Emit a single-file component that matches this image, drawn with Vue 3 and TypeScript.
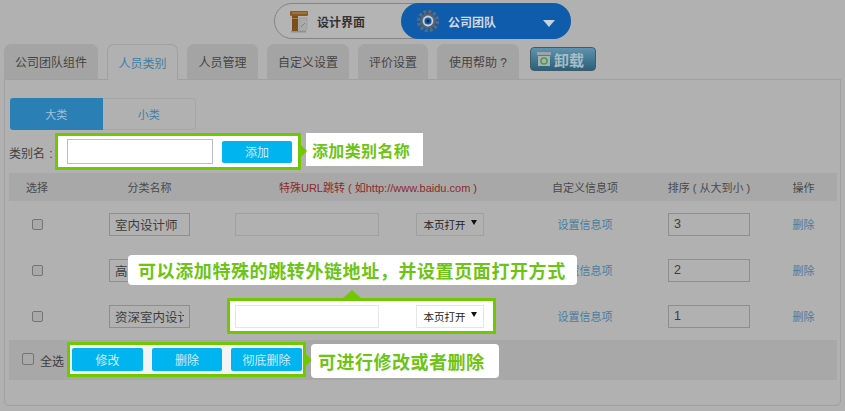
<script setup lang="ts">
const tabs = [
  { label: '公司团队组件', width: 94 },
  { label: '人员类别', width: 71, active: true },
  { label: '人员管理', width: 71 },
  { label: '自定义设置', width: 82 },
  { label: '评价设置', width: 70 },
  { label: '使用帮助 ?', width: 82 },
]
const rows = [
  { name: '室内设计师', sort: '3' },
  { name: '高级室内设计师', sort: '2' },
  { name: '资深室内设计师', sort: '1' },
]
</script>

<template>
  <div class="page">
    <header class="switcher">
      <div class="pill">
        <div class="pill-left">
          <svg class="wood" viewBox="0 0 20 23" width="20" height="23">
            <rect x="3" y="3" width="6" height="19" fill="#7a4f1c" />
            <rect x="1" y="1" width="18" height="5" rx="1" fill="#8a5a20" />
            <rect x="3" y="2.5" width="15" height="1" fill="#b48a4a" />
            <rect x="3" y="8" width="6" height="1" fill="#a87c3c" />
            <path d="M10 8h8v11l-2 2h-6z" fill="#aaa" stroke="#8e8e8e" stroke-width=".5" />
            <path d="M12 17l4-4" stroke="#777" stroke-width=".8" />
            <rect x="2" y="21" width="15" height="1.5" fill="#8f8f8f" />
          </svg>
          <span>设计界面</span>
        </div>
        <div class="pill-right">
          <svg viewBox="0 0 24 24" width="24" height="24">
            <circle cx="12" cy="12" r="9.5" fill="none" stroke="#5b6a78" stroke-width="3.4" stroke-dasharray="3 1.98" />
            <circle cx="12" cy="12" r="7.6" fill="#59636d" />
            <circle cx="12" cy="12" r="5.4" fill="#c8d2da" />
            <circle cx="12" cy="12" r="3.6" fill="#0f5aa8" />
            <circle cx="12" cy="12" r="1.5" fill="#10233a" />
          </svg>
          <span>公司团队</span>
          <i class="caret"></i>
        </div>
      </div>
    </header>

    <nav class="tabs">
      <div
        v-for="tab in tabs"
        :key="tab.label"
        class="tab"
        :class="{ active: tab.active }"
        :style="{ width: tab.width + 'px' }"
      >{{ tab.label }}</div>
      <button class="uninstall">
        <svg viewBox="0 0 16 16" width="16" height="16">
          <rect x="1" y="1" width="14" height="3" fill="#98a6ab" />
          <rect x="2" y="5" width="12" height="10" fill="#a8b2b2" />
          <circle cx="8" cy="10" r="3" fill="none" stroke="#4f9a4f" stroke-width="1.6" />
        </svg>
        <span>卸载</span>
      </button>
    </nav>

    <main class="panel">
      <div class="subtabs">
        <div class="subtab on">大类</div>
        <div class="subtab">小类</div>
      </div>

      <div class="name-row">类别名 :</div>

      <div class="table-head grid">
        <div>选择</div>
        <div>分类名称</div>
        <div class="red">特殊URL跳转 ( 如http://www.baidu.com )</div>
        <div>自定义信息项</div>
        <div>排序 ( 从大到小 )</div>
        <div>操作</div>
      </div>

      <div v-for="row in rows" :key="row.sort" class="grid row">
        <div><input type="checkbox" class="check" /></div>
        <div><input class="field name" :value="row.name" /></div>
        <div class="url-cell">
          <input class="field url" />
          <div class="select">本页打开<i class="mini"></i></div>
        </div>
        <div class="link">设置信息项</div>
        <div><input class="field sort" :value="row.sort" /></div>
        <div class="link">删除</div>
      </div>

      <div class="footer">
        <input type="checkbox" class="check" />
        <span>全选</span>
      </div>
    </main>

    <div class="hl hl-add">
      <input class="hl-input" />
      <button class="cta add">添加</button>
    </div>
    <div class="tip tip-add">添加类别名称</div>
    <i class="arrow arrow-add"></i>

    <div class="tip tip-url">可以添加特殊的跳转外链地址，并设置页面打开方式</div>
    <div class="hl hl-url">
      <input class="hl-url-input" />
      <div class="select bright">本页打开<i class="mini"></i></div>
    </div>
    <i class="arrow-up"></i>

    <div class="hl hl-actions">
      <button class="cta">修改</button>
      <button class="cta">删除</button>
      <button class="cta">彻底删除</button>
    </div>
    <i class="arrow arrow-actions"></i>
    <div class="tip tip-actions">可进行修改或者删除</div>
  </div>
</template>

<style>
html, body { margin: 0; background: #b1b1b1; }
</style>

<style scoped>
.page {
  position: relative;
  width: 845px;
  height: 411px;
  overflow: hidden;
  background: #b1b1b1;
  color: #3c3c3c;
  font: 12px "Liberation Sans", "Noto Sans CJK SC", sans-serif;
  box-sizing: border-box;
  padding: 3px 4px 0;
}
* { box-sizing: border-box; }
.switcher { display: flex; justify-content: center; height: 41px; }
.pill {
  width: 297px;
  height: 36px;
  display: flex;
  justify-content: space-between;
  border: 1px solid #858585;
  border-radius: 18px;
  background: #b4b4b4;
}
.pill-left { display: flex; align-items: center; gap: 8px; padding-left: 14px; font-weight: 700; color: #333; }
.pill-right {
  width: 170px;
  margin: -1px;
  display: flex;
  align-items: center;
  padding-left: 15px;
  border-radius: 18px;
  background: #0f5cad;
  color: #cfd9e4;
  font-weight: 700;
  position: relative;
}
.pill-right span { margin-left: 8px; }
.caret {
  position: absolute;
  right: 16px;
  top: 17px;
  border: 6px solid transparent;
  border-top: 7px solid #c5d2e0;
  border-bottom: 0;
}
.tabs { display: flex; align-items: flex-start; gap: 9px; height: 35px; }
.tab {
  height: 35px;
  border-radius: 7px 7px 0 0;
  background: #a4a4a4;
  display: flex;
  align-items: center;
  justify-content: center;
  color: #444;
  position: relative;
}
.tab.active {
  background: #b1b1b1;
  border: 1px solid #a0a0a0;
  border-bottom: 0;
  color: #3f7ea8;
  height: 36px;
  z-index: 1;
}
.uninstall {
  width: 66px;
  height: 24px;
  margin: 3px 0 0 2px;
  padding: 0 0 0 5px;
  display: flex;
  align-items: center;
  gap: 2px;
  border: 1px solid #425b68;
  border-radius: 4px;
  background: linear-gradient(#5f93ad, #2a6079);
  color: #a9bcc4;
  font: 700 15px "Noto Sans CJK SC", sans-serif;
}
.panel {
  width: 837px;
  height: 327px;
  border: 1px solid #a0a0a0;
  border-radius: 0 0 5px 5px;
  padding: 18px 4px 0;
}
.subtabs { display: flex; width: 186px; margin-left: 1px; height: 32px; }
.subtab {
  flex: 1;
  display: flex;
  align-items: center;
  justify-content: center;
  border: 1px solid #a6a6a6;
  border-left: 0;
  border-radius: 0 3px 3px 0;
  color: #3f7ea8;
  font-size: 11px;
}
.subtab.on { border: 0; border-radius: 3px 0 0 3px; background: #2a7fb5; color: #9fc3da; }
.name-row { height: 43px; display: flex; align-items: center; color: #444; padding-top: 1px; word-spacing: 1px; }
.grid { display: grid; grid-template-columns: 56px 169px 288px 126px 122px 67px; align-items: center; text-align: center; width: 828px; }
.table-head { height: 28px; background: #a8a8a8; font-size: 11px; color: #4a4a4a; }
.red { color: #8c2a2a; }
.row { height: 46px; }
.row .field { display: block; margin: 0 auto; }
.check {
  appearance: none;
  display: block;
  margin: 0 auto;
  width: 11px;
  height: 11px;
  border: 1px solid #757575;
  border-radius: 2px;
  background: #a9a9a9;
}
.field {
  height: 23px;
  padding: 0 5px;
  border: 1px solid #8e8e8e;
  background: #b1b1b1;
  color: #3d3d3d;
  font: 12.5px "Liberation Sans", "Noto Sans CJK SC", sans-serif;
  outline: none;
}
.name { width: 81px; }
.sort { width: 82px; }
.url-cell { display: flex; padding-left: 1px; gap: 37px; }
.row .url { width: 144px; margin: 0; border-color: #a0a0a0; }
.select {
  width: 68px;
  height: 23px;
  display: flex;
  align-items: center;
  justify-content: center;
  gap: 5px;
  font-size: 10.5px;
  color: #222;
  border: 1px solid #a0a0a0;
}
.select.bright { background: #fff; border-color: #e6e6e6; color: #222; }
.mini { border: 3px solid transparent; border-top: 5px solid #111; border-bottom: 0; margin-top: -3px; }
.link { color: #4a7d9f; font-size: 11px; }
.footer {
  margin-top: 1px;
  width: 828px;
  height: 40px;
  background: #a8a8a8;
  display: flex;
  align-items: center;
  padding-left: 13px;
  gap: 6px;
  color: #3c3c3c;
}
.footer .check { margin: -3px 0 0; width: 12px; height: 12px; }

.hl {
  position: absolute;
  border: 3px solid #72c800;
  background: #fff;
  display: flex;
  align-items: center;
}
.hl-add { left: 55px; top: 133px; width: 246px; height: 37px; padding-left: 9px; gap: 9px; }
.hl-input { width: 146px; height: 25px; border: 1px solid #bdbdbd; background: #fff; outline: none; }
.cta {
  width: 71px;
  height: 23px;
  padding: 0;
  border: 0;
  border-radius: 2px;
  background: #00b4f0;
  color: #cdeefc;
  font: 12px "Noto Sans CJK SC", sans-serif;
}
.add { width: 70px; height: 22px; }
.hl-url { left: 227px; top: 298px; width: 269px; height: 36px; padding-left: 5px; gap: 37px; }
.hl-url-input { width: 144px; height: 23px; border: 1px solid #e6e6e6; background: #fff; outline: none; }
.hl-actions { left: 67px; top: 342px; width: 239px; height: 35px; padding-left: 2px; gap: 9px; background: #f4f4f4; }
.hl-actions .cta:nth-child(2) { width: 70px; }
.tip {
  position: absolute;
  background: #fff;
  color: #6cc414;
  font: 700 18px "Noto Sans CJK SC", sans-serif;
  display: flex;
  align-items: center;
  white-space: nowrap;
}
.tip-add { left: 306px; top: 133px; width: 117px; height: 33px; padding-left: 6px; font-size: 16px; letter-spacing: .35px; }
.tip-url { left: 128px; top: 255px; width: 449px; height: 30px; padding-left: 10px; border-radius: 4px; font-size: 18px; letter-spacing: .6px; font-feature-settings: "chws" 0, "palt" 0; }
.tip-actions { left: 311px; top: 344px; width: 188px; height: 34px; padding-left: 7px; border-radius: 4px; letter-spacing: .5px; }
.arrow {
  position: absolute;
  border: 6px solid transparent;
  border-left: 6px solid #72c800;
  border-right: 0;
}
.arrow-add { left: 301px; top: 145px; }
.arrow-actions { left: 306px; top: 354px; }
.arrow-up {
  position: absolute;
  left: 343px;
  top: 290px;
  border: 9px solid transparent;
  border-bottom: 8px solid #72c800;
  border-top: 0;
}
</style>
